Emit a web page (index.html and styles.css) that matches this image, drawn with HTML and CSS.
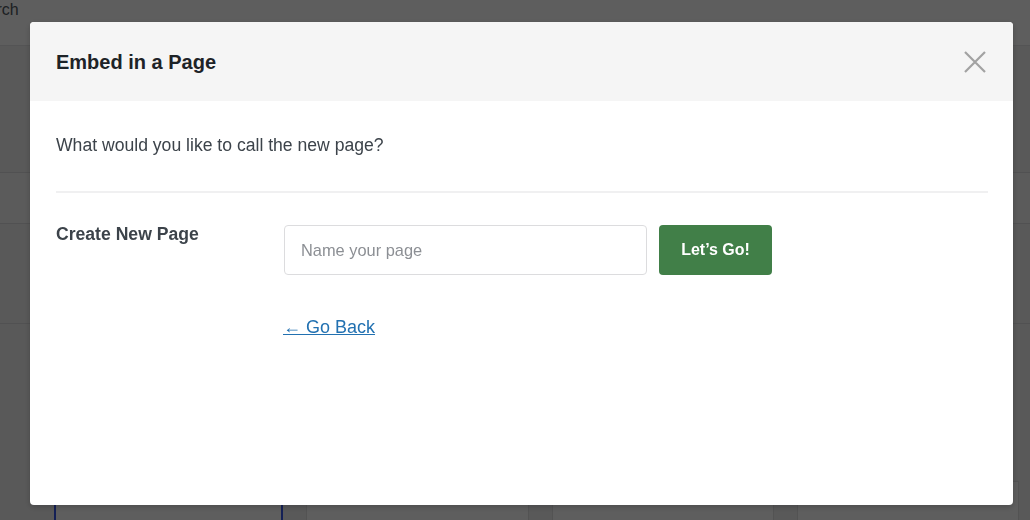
FILE: index.html
```html
<!DOCTYPE html>
<html lang="en">
<head>
  <meta charset="UTF-8" />
  <meta name="viewport" content="width=device-width, initial-scale=1.0"/>
  <title>Embed in a Page</title>
  <link rel="stylesheet" href="styles.css">
</head>
<body>
  <!-- Página por trás do modal -->
  <div class="page">
    <div class="topbar"><span class="search-label">Search</span></div>
    <div class="spacer"></div>
    <div class="row row-light"></div>
    <div class="row row-tall"></div>
    <div class="spacer-2"></div>
    <div class="cards">
      <div class="card selected"></div>
      <div class="card"></div>
      <div class="card"></div>
      <div class="card"></div>
    </div>
  </div>

  <div class="overlay"></div>

  <!-- Modal -->
  <div class="modal">
    <div class="modal-header">
      <h2>Embed in a Page</h2>
      <button class="close" aria-label="Close">
        <svg width="22" height="22" viewBox="0 0 22 22">
          <path d="M1 1 L21 21 M21 1 L1 21" stroke="#a2a2a2" stroke-width="2.2" fill="none"/>
        </svg>
      </button>
    </div>

    <div class="modal-body">
      <p class="question">What would you like to call the new page?</p>
      <hr class="divider">

      <div class="form-row">
        <label for="pageName">Create New Page</label>
        <div class="field">
          <input type="text" id="pageName" placeholder="Name your page">
          <button class="btn">Let’s Go!</button>
        </div>
      </div>

      <div class="back">
        <a href="#">← Go Back</a>
      </div>
    </div>
  </div>
</body>
</html>
```

FILE: styles.css
```css
/* Estilos gerais */
body {
  margin: 0;
  font-family: "Liberation Sans", Arial, sans-serif;
  background-color: #f0f0f1;
  overflow: hidden;
  height: 520px;
}

/* Página de fundo */
.page {
  height: 520px;
  overflow: hidden;
}

.topbar {
  height: 45px;
  background-color: #fff;
  border-bottom: 1px solid #e4e4e6;
  overflow: hidden;
}

.search-label {
  display: block;
  margin-left: -32px;
  padding-top: 1px;
  font-size: 16px;
  color: #50575e;
}

.spacer {
  height: 126px;
}

.row {
  border-top: 1px solid #dcdcde;
}

.row-light {
  height: 50px;
  background-color: #f6f7f7;
}

.row-tall {
  height: 99px;
  border-bottom: 1px solid #dcdcde;
}

.spacer-2 {
  height: 157px;
}

.cards {
  display: grid;
  grid-template-columns: 229px 223px 222px 222px;
  column-gap: 23px;
  padding-left: 54px;
}

.card {
  height: 40px;
  border: 1px solid #e0e0e2;
  background-color: #fff;
}

.card.selected {
  border: 2px solid #3858e9;
}

.overlay {
  position: fixed;
  inset: 0;
  background-color: rgba(0, 0, 0, 0.63);
}

/* Modal */
.modal {
  position: fixed;
  left: 30px;
  top: 22px;
  width: 983px;
  height: 483px;
  background-color: #fff;
  border-radius: 4px;
  overflow: hidden;
  box-shadow: 0 2px 6px rgba(0, 0, 0, 0.2);
}

.modal-header {
  height: 79px;
  background-color: #f5f5f5;
  display: flex;
  align-items: center;
  justify-content: space-between;
  padding: 0 27px 0 26px;
}

.modal-header h2 {
  margin: 0;
  padding-top: 2px;
  font-size: 20px;
  font-weight: bold;
  color: #1d2327;
}

.close {
  background: none;
  border: none;
  padding: 0;
  width: 22px;
  height: 22px;
  cursor: pointer;
}

.close svg {
  display: block;
}

.modal-body {
  padding: 32px 25px 0 26px;
}

.question {
  margin: 0;
  font-size: 17.6px;
  line-height: 24px;
  color: #3c434a;
}

.divider {
  margin: 34px 0 32px;
  border: none;
  border-top: 2px solid #f0f0f1;
}

/* Formulário */
.form-row {
  display: flex;
  align-items: flex-start;
}

.form-row label {
  width: 228px;
  font-size: 17.6px;
  line-height: 18px;
  font-weight: bold;
  color: #3c434a;
}

.field {
  display: flex;
  gap: 12px;
}

.field input {
  width: 363px;
  height: 50px;
  box-sizing: border-box;
  padding: 0 16px;
  font-family: inherit;
  font-size: 16.4px;
  color: #3c434a;
  border: 1px solid #dcdcde;
  border-radius: 4px;
  outline: none;
}

.field input::placeholder {
  color: #8c8f94;
}

.btn {
  width: 113px;
  height: 50px;
  background-color: #417f48;
  color: #fff;
  border: none;
  border-radius: 4px;
  font-family: inherit;
  font-size: 16px;
  font-weight: bold;
  cursor: pointer;
}

.btn:hover {
  background-color: #366b3c;
}

/* Link */
.back {
  margin-top: 40px;
  padding-left: 227px;
  font-size: 18px;
  line-height: 24px;
}

.back a {
  color: #2271b1;
  text-decoration: underline;
}
```
